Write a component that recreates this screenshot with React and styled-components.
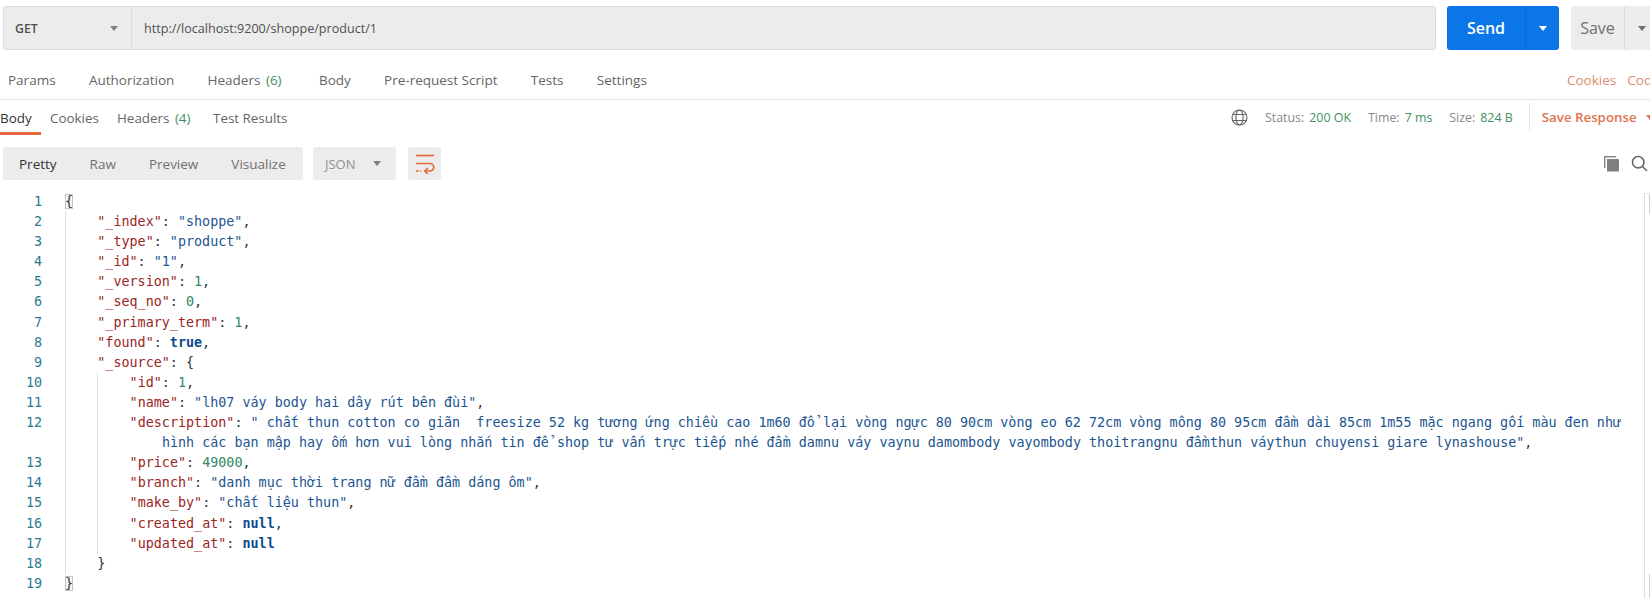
import React from "react";
import styled, { createGlobalStyle } from "styled-components";

const Global = createGlobalStyle`
  html, body { margin: 0; padding: 0; background: #fff; overflow: hidden; }
  body { font-family: "Open Sans", "Noto Sans", sans-serif; }
`;

const Page = styled.div`
  width: 1650px;
  height: 607px;
  overflow: hidden;
  background: #fff;
  color: #555;
`;

/* Request bar */
const RequestBar = styled.div`
  display: flex;
  height: 44px;
  margin-top: 6px;
  padding-left: 3px;
  width: 1700px;
`;
const UrlGroup = styled.div`
  display: flex;
  width: 1433px;
  box-sizing: border-box;
  background: #ececec;
  border: 1px solid #dcdcdc;
  border-radius: 3px;
`;
const Method = styled.div`
  display: flex;
  align-items: center;
  justify-content: space-between;
  box-sizing: border-box;
  width: 128px;
  padding: 0 13px 0 11px;
  border-right: 1px solid #dedede;
  font-size: 12.3px;
  font-weight: 600;
  color: #505050;
`;
const UrlText = styled.div`
  display: flex;
  align-items: center;
  padding-left: 12px;
  font-size: 12.6px;
  color: #505050;
`;
const Caret = styled.span`
  width: 0;
  height: 0;
  border-left: ${(p) => p.$size || 4}px solid transparent;
  border-right: ${(p) => p.$size || 4}px solid transparent;
  border-top: ${(p) => (p.$size || 4) + 1}px solid ${(p) => p.$color || "#808080"};
`;
const SplitButton = styled.div`
  display: flex;
  margin-left: ${(p) => p.$gap}px;
  height: 44px;
  border-radius: 3px;
  background: ${(p) => p.$bg};
  color: ${(p) => p.$fg};
  font-size: 16px;
  font-weight: ${(p) => p.$weight};
`;
const ButtonMain = styled.div`
  display: flex;
  align-items: center;
  justify-content: center;
  box-sizing: border-box;
  width: ${(p) => p.$w}px;
  border-right: 1px solid ${(p) => p.$line};
`;
const ButtonCaret = styled.div`
  display: flex;
  align-items: center;
  justify-content: center;
  width: ${(p) => p.$w}px;
`;

/* Tabs */
const RequestTabs = styled.div`
  display: flex;
  align-items: center;
  justify-content: space-between;
  box-sizing: border-box;
  height: 50px;
  padding: 11px 0 0 8px;
  border-bottom: 1px solid #e2e2e2;
  font-size: 13.5px;
  color: #666;
`;
const TabList = styled.div`
  display: flex;
  gap: 33.3px;
`;
const Tab = styled.span`
  margin-right: ${(p) => p.$extra || 0}px;
`;
const Count = styled.span`
  margin-left: 2px;
  color: #3f9160;
`;
const RightLinks = styled.div`
  display: flex;
  gap: 11px;
  width: 83px;
  white-space: nowrap;
  color: #d98c6c;
`;
const ResponseHeader = styled.div`
  display: flex;
  justify-content: space-between;
  height: 35px;
  font-size: 13.4px;
  color: #666;
`;
const ResponseTabs = styled.div`
  display: flex;
`;
const ResponseTab = styled.div`
  box-sizing: border-box;
  height: 35px;
  line-height: 37px;
  width: ${(p) => p.$w}px;
  margin-right: ${(p) => p.$after || 0}px;
  white-space: nowrap;
  color: ${(p) => (p.$active ? "#333" : "#666")};
  border-bottom: 3px solid ${(p) => (p.$active ? "#e4693f" : "transparent")};
`;
const StatusBar = styled.div`
  display: flex;
  align-items: center;
  width: 419px;
  flex: none;
  font-size: 12.4px;
  padding-bottom: 1px;
  box-sizing: border-box;
  white-space: nowrap;
`;
const GlobeWrap = styled.span`
  display: flex;
  margin-right: 17px;
`;
const Metric = styled.span`
  margin-right: 17px;
  color: #888;
`;
const MetricValue = styled.span`
  margin-left: 5px;
  color: #3f9160;
`;
const SaveResponse = styled.span`
  display: flex;
  align-items: center;
  gap: 9px;
  height: 28px;
  padding-left: 12px;
  margin-left: -1px;
  border-left: 1px solid #e6e6e6;
  color: #df7350;
  font-size: 13.3px;
  font-weight: 600;
`;

/* Toolbar */
const Toolbar = styled.div`
  display: flex;
  align-items: center;
  height: 33px;
  margin-top: 12px;
  padding-left: 3px;
`;
const ModeGroup = styled.div`
  display: flex;
  align-items: center;
  box-sizing: border-box;
  width: 300px;
  height: 33px;
  padding-left: 16px;
  gap: 33px;
  background: #ececec;
  border-radius: 3px;
  font-size: 13.5px;
  color: #707070;
`;
const Mode = styled.span`
  color: ${(p) => (p.$active ? "#333" : "#707070")};
`;
const Format = styled.div`
  display: flex;
  align-items: center;
  justify-content: space-between;
  box-sizing: border-box;
  width: 83px;
  height: 33px;
  margin-left: 10px;
  padding: 0 15px 0 12px;
  background: #ececec;
  border-radius: 3px;
  font-size: 13px;
  color: #909090;
`;
const WrapButton = styled.div`
  display: flex;
  align-items: center;
  justify-content: center;
  width: 33px;
  height: 33px;
  margin-left: 12px;
  background: #ececec;
  border-radius: 3px;
`;
const ToolIcons = styled.div`
  display: flex;
  align-items: center;
  gap: 11px;
  margin-left: auto;
  margin-right: 2px;
`;

/* Code */
const Editor = styled.div`
  position: relative;
  margin-top: 12px;
  padding-right: 12px;
  font-family: "DejaVu Sans Mono", "Liberation Mono", monospace;
  font-size: 13.4px;
  line-height: 20.1px;
  color: #333;
`;
const Row = styled.div`
  display: flex;
`;
const LineNumber = styled.div`
  flex: none;
  width: 42px;
  margin-right: 23px;
  text-align: right;
  color: #2b7a90;
`;
const Guide = styled.span`
  flex: none;
  box-sizing: border-box;
  width: 32.3px;
  border-left: 1px solid #dddddd;
`;
const Content = styled.div`
  flex: 1;
  min-width: 0;
  white-space: pre-wrap;
  padding-left: 32.3px;
  text-indent: -32.3px;
`;
const Key = styled.span`
  color: #9a2525;
`;
const Str = styled.span`
  color: #1c5590;
`;
const Num = styled.span`
  color: #2f8a63;
`;
const Kw = styled.span`
  color: #0b4a8c;
  font-weight: 700;
`;
const Bracket = styled.span`
  box-shadow: inset 0 0 0 1px #c4c4c4;
  background: #f7f7f7;
`;
const ScrollRuler = styled.div`
  position: absolute;
  top: 1px;
  right: 0;
  box-sizing: border-box;
  width: 6px;
  height: 405px;
  border-left: 1px solid #dedede;
  border-top: 1px solid #e6e6e6;
  &::before,
  &::after {
    content: "";
    position: absolute;
    right: 0;
    width: 1px;
    background: #cfcfcf;
  }
  &::before {
    top: 0;
    height: 20px;
  }
  &::after {
    bottom: 0;
    height: 24px;
  }
`;

const WrapIcon = () => (
  <svg width="20" height="20" viewBox="0 0 20 20" fill="none" stroke="#e4693f" strokeWidth="1.7">
    <path d="M1 1.500h18" />
    <path d="M1 9.500h14a3.500 3.500 0 0 1 0 7.500H10" />
    <path d="M12.800 14l-3 3 3 3" />
    <path d="M1 17h5" strokeDasharray="2.500 1.500" />
  </svg>
);
const GlobeIcon = () => (
  <svg width="17" height="17" viewBox="0 0 17 17" fill="none" stroke="#666" strokeWidth="1.1">
    <circle cx="8.500" cy="8.500" r="7.500" />
    <ellipse cx="8.500" cy="8.500" rx="3.600" ry="7.500" />
    <path d="M1.600 5.500h13.800M1.600 11.500h13.800" />
  </svg>
);
const CopyIcon = () => (
  <svg width="17" height="17" viewBox="0 0 17 17">
    <path d="M1 13V1h12v1.500H2.500V13z" fill="#8a8a8a" />
    <rect x="4" y="4" width="12" height="12.500" rx="0.500" fill="#808080" />
  </svg>
);
const SearchIcon = () => (
  <svg width="17" height="17" viewBox="0 0 17 17" fill="none" stroke="#666" strokeWidth="1.600">
    <circle cx="7.200" cy="7.200" r="5.700" />
    <path d="M11.500 11.500l4.500 4.500" />
  </svg>
);

const k = (t) => <Key>"{t}"</Key>;
const s = (t) => <Str>"{t}"</Str>;

const lines = [
  { level: 0, body: <Bracket>{"{"}</Bracket> },
  { level: 1, body: <>{k("_index")}: {s("shoppe")},</> },
  { level: 1, body: <>{k("_type")}: {s("product")},</> },
  { level: 1, body: <>{k("_id")}: {s("1")},</> },
  { level: 1, body: <>{k("_version")}: <Num>1</Num>,</> },
  { level: 1, body: <>{k("_seq_no")}: <Num>0</Num>,</> },
  { level: 1, body: <>{k("_primary_term")}: <Num>1</Num>,</> },
  { level: 1, body: <>{k("found")}: <Kw>true</Kw>,</> },
  { level: 1, body: <>{k("_source")}: {"{"}</> },
  { level: 2, body: <>{k("id")}: <Num>1</Num>,</> },
  { level: 2, body: <>{k("name")}: {s("lh07 váy body hai dây rút bên đùi")},</> },
  {
    level: 2,
    body: (
      <>
        {k("description")}:{" "}
        {s(" chất thun cotton co giãn  freesize 52 kg tương ứng chiều cao 1m60 đổ lại vòng ngực 80 90cm vòng eo 62 72cm vòng mông 80 95cm đầm dài 85cm 1m55 mặc ngang gối màu đen như hình các bạn mập hay ốm hơn vui lòng nhắn tin để shop tư vấn trực tiếp nhé đầm damnu váy vaynu damombody vayombody thoitrangnu đầmthun váythun chuyensi giare lynashouse")},
      </>
    ),
  },
  { level: 2, body: <>{k("price")}: <Num>49000</Num>,</> },
  { level: 2, body: <>{k("branch")}: {s("danh mục thời trang nữ đầm đầm dáng ôm")},</> },
  { level: 2, body: <>{k("make_by")}: {s("chất liệu thun")},</> },
  { level: 2, body: <>{k("created_at")}: <Kw>null</Kw>,</> },
  { level: 2, body: <>{k("updated_at")}: <Kw>null</Kw></> },
  { level: 1, body: <>{"}"}</> },
  { level: 0, body: <Bracket>{"}"}</Bracket> },
];

export default function App() {
  return (
    <Page>
      <Global />
      <RequestBar>
        <UrlGroup>
          <Method>
            GET
            <Caret />
          </Method>
          <UrlText>http://localhost:9200/shoppe/product/1</UrlText>
        </UrlGroup>
        <SplitButton $gap={11} $bg="#0b76e8" $fg="#fff" $weight={600}>
          <ButtonMain $w={79} $line="#0a6ad2">Send</ButtonMain>
          <ButtonCaret $w={33}><Caret $color="#fff" /></ButtonCaret>
        </SplitButton>
        <SplitButton $gap={12} $bg="#ececec" $fg="#707070" $weight={400}>
          <ButtonMain $w={54} $line="#dcdcdc">Save</ButtonMain>
          <ButtonCaret $w={33}><Caret $color="#707070" /></ButtonCaret>
        </SplitButton>
      </RequestBar>

      <RequestTabs>
        <TabList>
          <Tab>Params</Tab>
          <Tab>Authorization</Tab>
          <Tab $extra={4}>Headers <Count>(6)</Count></Tab>
          <Tab>Body</Tab>
          <Tab>Pre-request Script</Tab>
          <Tab>Tests</Tab>
          <Tab>Settings</Tab>
        </TabList>
        <RightLinks>
          <span>Cookies</span>
          <span>Code</span>
        </RightLinks>
      </RequestTabs>

      <ResponseHeader>
        <ResponseTabs>
          <ResponseTab $active $w={41} $after={9}>Body</ResponseTab>
          <ResponseTab $w={49} $after={18}>Cookies</ResponseTab>
          <ResponseTab $w={78} $after={18}>Headers <Count>(4)</Count></ResponseTab>
          <ResponseTab $w={80}>Test Results</ResponseTab>
        </ResponseTabs>
        <StatusBar>
          <GlobeWrap><GlobeIcon /></GlobeWrap>
          <Metric>Status:<MetricValue>200 OK</MetricValue></Metric>
          <Metric>Time:<MetricValue>7 ms</MetricValue></Metric>
          <Metric>Size:<MetricValue>824 B</MetricValue></Metric>
          <SaveResponse>Save Response <Caret $size={4} $color="#df7350" /></SaveResponse>
        </StatusBar>
      </ResponseHeader>

      <Toolbar>
        <ModeGroup>
          <Mode $active>Pretty</Mode>
          <Mode>Raw</Mode>
          <Mode>Preview</Mode>
          <Mode>Visualize</Mode>
        </ModeGroup>
        <Format>
          JSON
          <Caret />
        </Format>
        <WrapButton><WrapIcon /></WrapButton>
        <ToolIcons>
          <CopyIcon />
          <SearchIcon />
        </ToolIcons>
      </Toolbar>

      <Editor>
        {lines.map((line, i) => (
          <Row key={i}>
            <LineNumber>{i + 1}</LineNumber>
            {line.level >= 1 ? <Guide /> : null}
            {line.level >= 2 ? <Guide /> : null}
            <Content>{line.body}</Content>
          </Row>
        ))}
        <ScrollRuler />
      </Editor>
    </Page>
  );
}
